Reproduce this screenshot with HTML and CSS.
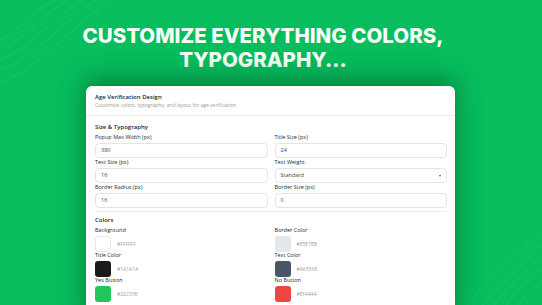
FILE: index.html
```html
<!DOCTYPE html>
<html lang="en">
<head>
  <meta charset="UTF-8" />
  <meta name="viewport" content="width=device-width, initial-scale=1.0"/>
  <title>Customize Everything</title>
  <link rel="stylesheet" href="styles.css">
</head>
<body>

<div class="page">
  <!-- topo lines in the corners -->
  <svg class="topo topo-left" width="110" height="90" viewBox="0 0 110 90">
    <path d="M0 40 C20 30 30 12 55 0" />
    <path d="M0 50 C24 40 38 18 68 0" />
    <path d="M0 60 C28 50 46 24 82 0" />
    <path d="M0 70 C32 60 54 30 96 0" />
    <path d="M0 82 C36 70 62 36 110 0" />
  </svg>
  <svg class="topo topo-right" width="110" height="110" viewBox="0 0 110 110">
    <path d="M110 50 C90 70 70 90 50 110" />
    <path d="M110 62 C86 80 72 98 62 110" />
    <path d="M110 74 C92 88 82 100 74 110" />
    <path d="M110 86 C98 96 90 104 86 110" />
    <path d="M110 36 C84 62 54 84 36 110" />
  </svg>

  <h1 class="headline">CUSTOMIZE EVERYTHING COLORS,<br>TYPOGRAPHY...</h1>

  <div class="card">
    <div class="card-head">
      <div class="card-title">Age Verification Design</div>
      <div class="card-sub">Customize colors, typography, and layout for age verification</div>
    </div>

    <div class="section">
      <div class="section-title">Size &amp; Typography</div>
      <div class="fields">
        <div class="field">
          <label>Popup Max Width (px)</label>
          <div class="input">380</div>
        </div>
        <div class="field">
          <label>Title Size (px)</label>
          <div class="input">24</div>
        </div>
        <div class="field">
          <label>Text Size (px)</label>
          <div class="input">16</div>
        </div>
        <div class="field">
          <label>Text Weight</label>
          <div class="input select">Standard <span class="caret"></span></div>
        </div>
        <div class="field">
          <label>Border Radius (px)</label>
          <div class="input">16</div>
        </div>
        <div class="field">
          <label>Border Size (px)</label>
          <div class="input">0</div>
        </div>
      </div>
    </div>

    <div class="section colors">
      <div class="section-title">Colors</div>
      <div class="color-grid">
        <div class="color">
          <label>Background</label>
          <div class="swatch-row"><span class="swatch white" style="background:#FFFFFF"></span><span class="hex">#FFFFFF</span></div>
        </div>
        <div class="color">
          <label>Border Color</label>
          <div class="swatch-row"><span class="swatch" style="background:#E5E7EB"></span><span class="hex">#E5E7EB</span></div>
        </div>
        <div class="color">
          <label>Title Color</label>
          <div class="swatch-row"><span class="swatch" style="background:#1A1A1A"></span><span class="hex">#1A1A1A</span></div>
        </div>
        <div class="color">
          <label>Text Color</label>
          <div class="swatch-row"><span class="swatch" style="background:#4A5568"></span><span class="hex">#4A5568</span></div>
        </div>
        <div class="color">
          <label>Yes Button</label>
          <div class="swatch-row"><span class="swatch" style="background:#22C55E"></span><span class="hex">#22C55E</span></div>
        </div>
        <div class="color">
          <label>No Button</label>
          <div class="swatch-row"><span class="swatch" style="background:#EF4444"></span><span class="hex">#EF4444</span></div>
        </div>
      </div>
    </div>
  </div>
</div>

</body>
</html>
```

FILE: styles.css
```css
body {
  margin: 0;
  font-family: "Open Sans", "Noto Sans", sans-serif;
}

.page {
  position: relative;
  width: 542px;
  height: 305px;
  overflow: hidden;
  background: #07bd5e;
}

.topo {
  position: absolute;
  fill: none;
  stroke: rgba(255, 255, 255, 0.12);
  stroke-width: 0.7;
}

.topo-left {
  top: 0;
  left: 0;
}

.topo-right {
  right: 0;
  bottom: 0;
}

.headline {
  position: relative;
  margin: 0;
  padding: 24px 16px 0 0;
  text-align: center;
  color: #f4fff8;
  font-family: Inter, sans-serif;
  font-weight: 800;
  font-size: 20.5px;
  line-height: 24px;
  letter-spacing: 0;
}

.card {
  position: relative;
  width: 369px;
  height: 240px;
  margin: 14px 0 0 86px;
  background: #fff;
  border-radius: 6px 6px 0 0;
  box-shadow: 0 -6px 26px rgba(0, 70, 30, 0.55);
}

.card-head {
  padding: 7px 9px 6px;
  border-bottom: 1px solid #eee;
}

.card-title {
  font-size: 6px;
  line-height: 8px;
  font-weight: 600;
  color: #1f1f1f;
}

.card-sub {
  font-size: 5px;
  line-height: 7px;
  color: #9a9a9a;
  margin-top: 1px;
}

.section {
  padding: 7px 8px 0 9px;
}

.section-title {
  font-size: 6px;
  line-height: 8px;
  font-weight: 600;
  color: #2a2a2a;
  margin-bottom: 3px;
}

.fields {
  display: grid;
  grid-template-columns: 1fr 1fr;
  column-gap: 7px;
  row-gap: 1px;
  padding-bottom: 3px;
  border-bottom: 1px solid #ececec;
}

label {
  display: block;
  font-size: 5.5px;
  line-height: 7px;
  color: #2a2a2a;
  margin-bottom: 2px;
}

.input {
  height: 13px;
  border: 1px solid #e4e4e4;
  border-radius: 4px;
  padding: 0 5px;
  font-size: 5.5px;
  line-height: 13px;
  color: #444;
  display: flex;
  align-items: center;
  justify-content: space-between;
}

.caret {
  width: 0;
  height: 0;
  border-left: 1.5px solid transparent;
  border-right: 1.5px solid transparent;
  border-top: 2px solid #555;
}

.colors {
  padding-top: 4px;
}

.color-grid {
  display: grid;
  grid-template-columns: 1fr 1fr;
  column-gap: 7px;
  row-gap: 0;
}

.swatch-row {
  display: flex;
  align-items: center;
  gap: 6px;
}

.swatch {
  width: 16px;
  height: 16px;
  border-radius: 3px;
  box-sizing: border-box;
}

.swatch.white {
  border: 1px solid #e8e8e8;
}

.hex {
  font-size: 5px;
  color: #a0a0a0;
}
```
